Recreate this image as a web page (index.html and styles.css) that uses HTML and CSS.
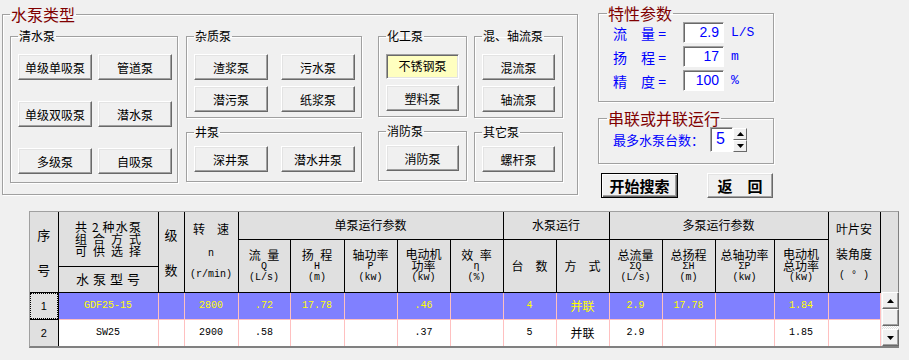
FILE: index.html
```html
<!DOCTYPE html>
<html lang="zh">
<head>
    <meta charset="UTF-8">
    <title>水泵选型</title>
    <link rel="stylesheet" href="styles.css">
</head>
<body>

<div class="top">
    <fieldset class="group outer">
        <legend>水泵类型</legend>
        <div class="types">
            <fieldset class="group qs">
                <legend>清水泵</legend>
                <div class="btns">
                    <button class="btn">单级单吸泵</button>
                    <button class="btn">管道泵</button>
                    <button class="btn">单级双吸泵</button>
                    <button class="btn">潜水泵</button>
                    <button class="btn">多级泵</button>
                    <button class="btn">自吸泵</button>
                </div>
            </fieldset>

            <div class="col col2">
                <fieldset class="group upper">
                    <legend>杂质泵</legend>
                    <div class="btns">
                        <button class="btn">渣浆泵</button>
                        <button class="btn">污水泵</button>
                        <button class="btn">潜污泵</button>
                        <button class="btn">纸浆泵</button>
                    </div>
                </fieldset>
                <fieldset class="group lower">
                    <legend>井泵</legend>
                    <div class="btns">
                        <button class="btn">深井泵</button>
                        <button class="btn">潜水井泵</button>
                    </div>
                </fieldset>
            </div>

            <div class="col col3">
                <fieldset class="group upper">
                    <legend>化工泵</legend>
                    <div class="btns">
                        <button class="btn on">不锈钢泵</button>
                        <button class="btn">塑料泵</button>
                    </div>
                </fieldset>
                <fieldset class="group lower">
                    <legend>消防泵</legend>
                    <div class="btns">
                        <button class="btn">消防泵</button>
                    </div>
                </fieldset>
            </div>

            <div class="col col4">
                <fieldset class="group upper">
                    <legend>混、轴流泵</legend>
                    <div class="btns">
                        <button class="btn">混流泵</button>
                        <button class="btn">轴流泵</button>
                    </div>
                </fieldset>
                <fieldset class="group lower">
                    <legend>其它泵</legend>
                    <div class="btns">
                        <button class="btn">螺杆泵</button>
                    </div>
                </fieldset>
            </div>
        </div>
    </fieldset>

    <div class="side">
        <fieldset class="group param">
            <legend>特性参数</legend>
            <div class="prow"><span class="plbl">流　量 =</span><span class="val">2.9</span><span class="unit">L/S</span></div>
            <div class="prow"><span class="plbl">扬　程 =</span><span class="val">17</span><span class="unit">m</span></div>
            <div class="prow"><span class="plbl">精　度 =</span><span class="val">100</span><span class="unit">%</span></div>
        </fieldset>

        <fieldset class="group serial">
            <legend>串联或并联运行</legend>
            <div class="srow">
                <span class="slbl">最多水泵台数：</span>
                <span class="spinval">5</span>
                <span class="arrows">
                    <span class="arr"><svg width="7" height="4" viewBox="0 0 7 4"><path d="M3.5 0 L7 4 L0 4 Z" fill="#000"/></svg></span>
                    <span class="arr"><svg width="7" height="4" viewBox="0 0 7 4"><path d="M0 0 L7 0 L3.5 4 Z" fill="#000"/></svg></span>
                </span>
            </div>
        </fieldset>

        <div class="actions">
            <button class="btn big search">开始搜索</button>
            <button class="btn big back">返&emsp;回</button>
        </div>
    </div>
</div>

<div class="grid">
    <table>
        <colgroup>
            <col style="width:28px"><col style="width:100px"><col style="width:26px"><col style="width:54px">
            <col style="width:52px"><col style="width:54px"><col style="width:53px"><col style="width:53px">
            <col style="width:53px"><col style="width:53px"><col style="width:53px"><col style="width:53px">
            <col style="width:53px"><col style="width:59px"><col style="width:54px"><col style="width:52px">
            <col style="width:18px">
        </colgroup>
        <thead>
            <tr class="h1">
                <th rowspan="2" class="stack"><div>序</div><div class="lo">号</div></th>
                <th rowspan="2" class="model">
                    <div class="model-top">
                        <div class="j">共 2 种水泵</div>
                        <div class="j">组 合 方 式</div>
                        <div class="j">可 供 选 择</div>
                    </div>
                    <div class="model-bot"><div class="j">水 泵 型 号</div></div>
                </th>
                <th rowspan="2" class="stack"><div>级</div><div class="lo">数</div></th>
                <th rowspan="2" class="tri"><div>转　速</div><div class="m l2">n</div><div class="m l3">(r/min)</div></th>
                <th colspan="5">单泵运行参数</th>
                <th colspan="2">水泵运行</th>
                <th colspan="4">多泵运行参数</th>
                <th rowspan="2" class="tri"><div>叶片安</div><div class="l2">装角度</div><div class="m l3">( ° )</div></th>
                <th rowspan="2" class="sbh"></th>
            </tr>
            <tr class="h2">
                <th><div class="sp">流 量</div><div class="m">Q</div><div class="m">(L/s)</div></th>
                <th><div class="sp">扬 程</div><div class="m">H</div><div class="m">(m)</div></th>
                <th><div>轴功率</div><div class="m">P</div><div class="m">(kw)</div></th>
                <th><div>电动机</div><div>功率</div><div class="m">(kw)</div></th>
                <th><div class="sp">效 率</div><div class="m">η</div><div class="m">(%)</div></th>
                <th>台　数</th>
                <th>方　式</th>
                <th><div>总流量</div><div class="m">ΣQ</div><div class="m">(L/s)</div></th>
                <th><div>总扬程</div><div class="m">ΣH</div><div class="m">(m)</div></th>
                <th><div>总轴功率</div><div class="m">ΣP</div><div class="m">(kw)</div></th>
                <th><div>电动机</div><div>总功率</div><div class="m">(kw)</div></th>
            </tr>
        </thead>
        <tbody>
            <tr class="sel">
                <td class="no"><div class="focus">1</div></td>
                <td>GDF25-15</td>
                <td></td>
                <td>2800</td>
                <td>.72</td>
                <td>17.78</td>
                <td></td>
                <td>.46</td>
                <td></td>
                <td>4</td>
                <td class="cn">并联</td>
                <td>2.9</td>
                <td>17.78</td>
                <td></td>
                <td>1.84</td>
                <td></td>
                <td rowspan="2" class="sbc">
                    <div class="sb">
                        <div class="sb-btn"><svg width="7" height="4" viewBox="0 0 7 4"><path d="M3.5 0 L7 4 L0 4 Z" fill="#000"/></svg></div>
                        <div class="sb-thumb"></div>
                        <div class="sb-track"></div>
                        <div class="sb-btn"><svg width="7" height="4" viewBox="0 0 7 4"><path d="M0 0 L7 0 L3.5 4 Z" fill="#000"/></svg></div>
                    </div>
                </td>
            </tr>
            <tr>
                <td class="no">2</td>
                <td>SW25</td>
                <td></td>
                <td>2900</td>
                <td>.58</td>
                <td></td>
                <td></td>
                <td>.37</td>
                <td></td>
                <td>5</td>
                <td class="cn">并联</td>
                <td>2.9</td>
                <td></td>
                <td></td>
                <td>1.85</td>
                <td></td>
            </tr>
        </tbody>
    </table>
</div>

</body>
</html>
```

FILE: styles.css
```css
body {
    margin: 0;
    background-color: #f0f0f0;
    font-family: "Noto Sans CJK SC", sans-serif;
    font-size: 12px;
    color: #000;
    width: 909px;
    height: 360px;
    overflow: hidden;
}

/* ---------- group boxes ---------- */

.group {
    margin: 0;
    padding: 0 5px 0 7px;
    border: 1px solid #a0a0a0;
    box-shadow: inset 1px 1px #fff, 1px 1px #fff;
    min-inline-size: 0;
    box-sizing: border-box;
}

.group legend {
    padding: 0 1px;
    font-size: 12px;
    line-height: 14px;
}

.top {
    display: flex;
    align-items: flex-start;
}

.outer {
    margin: 4px 0 0 2px;
    width: 576px;
    padding: 5px 14px 11px 7px;
}

.outer > legend,
.side legend {
    font-size: 16px;
    line-height: 20px;
    color: #800000;
}

.types {
    display: flex;
    align-items: flex-start;
}

.col {
    display: flex;
    flex-direction: column;
    gap: 7px;
}

.col2 { margin-left: 8px; width: 176px; }
.col3 { margin-left: 16px; width: 89px; }
.col4 { margin-left: 7px; width: 89px; }

.qs {
    width: 168px;
    padding: 11px 5px 8px 7px;
}

.upper { padding: 11px 6px 5px 7px; }
.lower { padding: 7px 6px 9px 7px; }

.btns {
    display: grid;
    grid-template-columns: repeat(2, 74px);
    column-gap: 13px;
    row-gap: 6px;
}

.qs .btns {
    column-gap: 6px;
    row-gap: 21px;
}

.col3 .btns,
.col4 .btns {
    grid-template-columns: 73px;
}

/* ---------- buttons ---------- */

.btn {
    width: 100%;
    height: 26px;
    margin: 0;
    padding: 0;
    background-color: #f0f0f0;
    border: 1px solid;
    border-color: #fff #696969 #696969 #fff;
    box-shadow: inset -1px -1px #a0a0a0, inset 1px 1px #e3e3e3;
    font-family: "Noto Sans CJK SC", sans-serif;
    font-size: 12px;
    color: #000;
}

.btn.on {
    height: 25px;
    background-color: #ffffc0;
    border-color: #a0a0a0 #fff #fff #a0a0a0;
    box-shadow: inset 1px 1px #696969, inset -1px -1px #e3e3e3;
    padding-bottom: 2px;
}

/* ---------- right side ---------- */

.side {
    margin: 4px 0 0 20px;
    width: 176px;
}

.side legend {
    line-height: 18px;
}

.param {
    padding: 0 8px 10px 8px;
}

.prow {
    display: flex;
    align-items: center;
    height: 21px;
    margin-top: 3px;
    padding-left: 6px;
    color: #0000ff;
}

.prow:first-of-type { margin-top: 0; }

.plbl {
    width: 70px;
    font-size: 14px;
    white-space: pre;
}

.val {
    width: 41px;
    height: 21px;
    box-sizing: border-box;
    background-color: #fff;
    border: 1px solid;
    border-color: #a0a0a0 #fff #fff #a0a0a0;
    box-shadow: inset 1px 1px #696969;
    font-family: "Liberation Sans", sans-serif;
    font-size: 14px;
    line-height: 18px;
    text-align: right;
    padding-right: 4px;
}

.unit {
    margin-left: 7px;
    font-family: "Liberation Mono", monospace;
    font-size: 13px;
}

.serial {
    margin-top: 7px;
    padding: 0 8px 11px 8px;
}

.srow {
    display: flex;
    align-items: center;
    padding-left: 6px;
    color: #0000ff;
}

.slbl {
    width: 97px;
    font-size: 13px;
}

.spinval {
    width: 23px;
    height: 25px;
    box-sizing: border-box;
    background-color: #fff;
    border: 1px solid;
    border-color: #a0a0a0 #fff #fff #a0a0a0;
    box-shadow: inset 1px 1px #696969;
    font-family: "Liberation Sans", sans-serif;
    font-size: 16px;
    line-height: 22px;
    padding-left: 5px;
}

.arrows {
    display: flex;
    flex-direction: column;
}

.arr {
    display: flex;
    align-items: center;
    justify-content: center;
    width: 14px;
    height: 12px;
    box-sizing: border-box;
    background-color: #f0f0f0;
    border: 1px solid;
    border-color: #fff #696969 #696969 #fff;
}

.actions {
    display: flex;
    margin-top: 9px;
}

.btn.big {
    height: 25px;
    font-size: 15px;
    font-weight: bold;
}

.search {
    width: 77px;
    margin-left: 3px;
    border: 1px solid #000;
    box-shadow: inset 1px 1px #fff, inset -1px -1px #696969, inset -2px -2px #a0a0a0;
}

.back {
    width: 66px;
    height: 24px;
    margin-left: 29px;
}

/* ---------- result grid ---------- */

.grid {
    margin: 13px 0 0 29px;
    width: 868px;
    border: 1px solid #a0a0a0;
    border-right-color: #808080;
    border-bottom: 2px solid #808080;
}

table {
    width: 868px;
    table-layout: fixed;
    border-collapse: collapse;
    border-style: hidden;
}

th {
    background-color: #e0e0e0;
    border: 1px solid #000;
    padding: 0;
    font-weight: normal;
    font-size: 12px;
    line-height: 12px;
    text-align: center;
    vertical-align: middle;
}

.h1 { height: 27px; }
.h2 { height: 53px; }

th .m {
    font-family: "Liberation Mono", monospace;
    font-size: 10px;
    line-height: 11px;
}

th .sp {
    word-spacing: 4px;
}

th.stack,
th.tri {
    vertical-align: top;
}

th.stack {
    font-size: 13px;
    padding-top: 17px;
}

th.stack .lo {
    margin-top: 23px;
}

th.tri {
    padding-top: 11px;
}

th.tri .l2 { margin-top: 13px; }
th.tri .l3 { margin-top: 10px; }

th.model {
    vertical-align: top;
}

.model-top {
    height: 54px;
    box-sizing: border-box;
    padding-top: 9px;
}

.model-bot {
    height: 24px;
    border-top: 1px solid #000;
    display: flex;
    align-items: center;
    justify-content: center;
    font-size: 13px;
}

.j {
    width: 66px;
    margin: 0 auto;
    text-align: justify;
    text-align-last: justify;
}

.model-bot .j {
    width: 64px;
}

th.sbh {
    border-bottom: none;
}

td {
    height: 26px;
    padding: 0;
    border: 1px solid #ffc0c0;
    background-color: #fff;
    font-family: "Liberation Mono", monospace;
    font-size: 10px;
    text-align: center;
}

td.cn {
    font-family: "Noto Sans CJK SC", sans-serif;
    font-size: 12px;
}

td.no {
    background-color: #e0e0e0;
    border: 1px solid #000;
    font-family: "Liberation Sans", sans-serif;
    font-size: 11px;
}

.sel td {
    background-color: #8080ff;
    color: #ffff00;
}

.sel td.no {
    background-color: #e0e0e0;
    color: #000;
}

.focus {
    height: 24px;
    line-height: 24px;
    margin: 0 1px;
    outline: 1px dotted #000;
}

td.sbc {
    background-color: #f0f0f0;
    border: none;
    vertical-align: top;
}

.sb {
    display: flex;
    flex-direction: column;
    width: 17px;
    height: 54px;
    margin-left: 1px;
}

.sb-btn,
.sb-thumb {
    display: flex;
    align-items: center;
    justify-content: center;
    height: 17px;
    box-sizing: border-box;
    background-color: #f0f0f0;
    border: 1px solid;
    border-color: #fff #696969 #696969 #fff;
    box-shadow: inset -1px -1px #a0a0a0;
}

.sb-thumb {
    height: 17px;
}

.sb-track {
    flex: 1;
    background-image: repeating-conic-gradient(#fff 0 25%, #e0e0e0 0 50%);
    background-size: 2px 2px;
}
```
